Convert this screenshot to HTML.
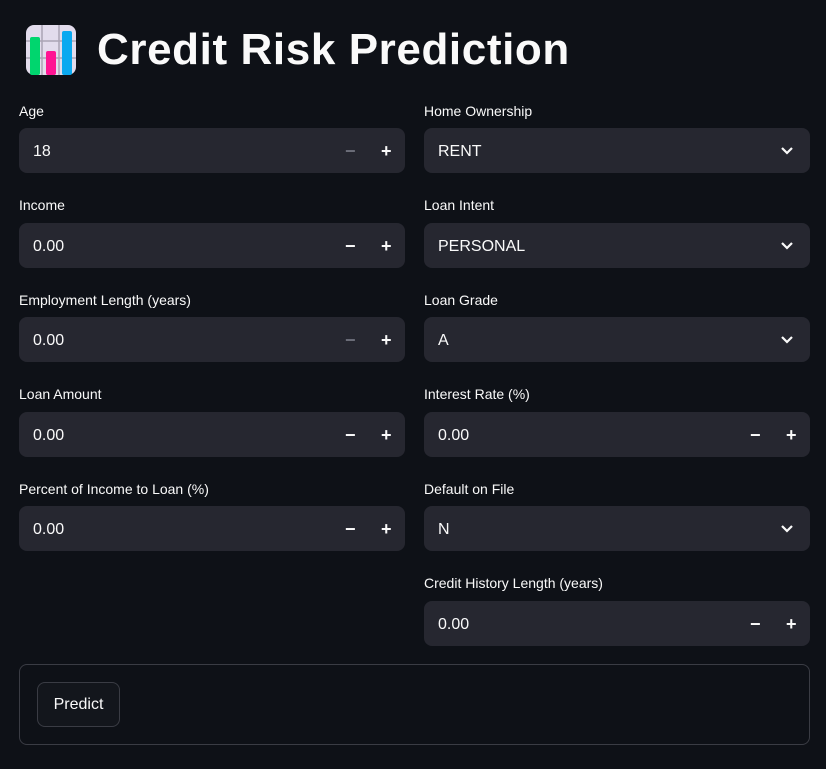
<!DOCTYPE html>
<html><head><meta charset="utf-8"><style>
*{box-sizing:border-box;margin:0;padding:0}
body{width:826px;height:769px;background:#0e1117;color:#fafafa;font-family:"Liberation Sans",sans-serif;position:relative;overflow:hidden}
.title{position:absolute;left:97px;top:24px;font-size:44px;font-weight:bold;letter-spacing:0.6px;line-height:52px}
.lbl{position:absolute;font-size:14px;color:#fafafa;line-height:16px}
.in{position:absolute;width:386px;height:45px;background:#262730;border-radius:8px;font-size:16px;line-height:47px;padding-left:14px}
.pm{position:absolute;top:0;font-size:18px;font-weight:bold}
.chev{position:absolute;right:16px;top:15px}
.form{position:absolute;left:19px;top:664px;width:791px;height:81px;border:1px solid #3a3c44;border-radius:8px}
.btn{position:absolute;left:37px;top:682px;width:83px;height:45px;border:1px solid #3a3c44;border-radius:8px;background:#13161c;font-size:16px;line-height:43px;text-align:center}
</style></head><body>
<svg style="position:absolute;left:26px;top:25px" width="50" height="50" viewBox="0 0 50 50">
<rect x="0" y="0" width="50" height="50" rx="8" fill="#e2dcec"/>
<path d="M16 0V50M33 0V50M0 16H50M0 33H50" stroke="#aaa4b4" stroke-width="1.5"/>
<rect x="4" y="12" width="10" height="38" rx="2" fill="#00d66e"/>
<rect x="20" y="26" width="10" height="24" rx="2" fill="#ff1493"/>
<rect x="36" y="6" width="10" height="44" rx="2" fill="#0aa9f0"/>
</svg>
<div class="title">Credit Risk Prediction</div>

<div class="lbl" style="left:19px;top:103px">Age</div>
<div class="in" style="left:19px;top:128px">18<span class="pm" style="left:326px;color:#6b6d78">−</span><span class="pm" style="left:362px">+</span></div>
<div class="lbl" style="left:19px;top:197px">Income</div>
<div class="in" style="left:19px;top:223px">0.00<span class="pm" style="left:326px">−</span><span class="pm" style="left:362px">+</span></div>
<div class="lbl" style="left:19px;top:292px">Employment Length (years)</div>
<div class="in" style="left:19px;top:317px">0.00<span class="pm" style="left:326px;color:#6b6d78">−</span><span class="pm" style="left:362px">+</span></div>
<div class="lbl" style="left:19px;top:386px">Loan Amount</div>
<div class="in" style="left:19px;top:412px">0.00<span class="pm" style="left:326px">−</span><span class="pm" style="left:362px">+</span></div>
<div class="lbl" style="left:19px;top:481px">Percent of Income to Loan (%)</div>
<div class="in" style="left:19px;top:506px">0.00<span class="pm" style="left:326px">−</span><span class="pm" style="left:362px">+</span></div>

<div class="lbl" style="left:424px;top:103px">Home Ownership</div>
<div class="in" style="left:424px;top:128px">RENT<svg class="chev" width="14" height="14" viewBox="0 0 14 14"><path d="M2 5l5 5 5-5" stroke="#fafafa" stroke-width="2.2" fill="none"/></svg></div>
<div class="lbl" style="left:424px;top:197px">Loan Intent</div>
<div class="in" style="left:424px;top:223px">PERSONAL<svg class="chev" width="14" height="14" viewBox="0 0 14 14"><path d="M2 5l5 5 5-5" stroke="#fafafa" stroke-width="2.2" fill="none"/></svg></div>
<div class="lbl" style="left:424px;top:292px">Loan Grade</div>
<div class="in" style="left:424px;top:317px">A<svg class="chev" width="14" height="14" viewBox="0 0 14 14"><path d="M2 5l5 5 5-5" stroke="#fafafa" stroke-width="2.2" fill="none"/></svg></div>
<div class="lbl" style="left:424px;top:386px">Interest Rate (%)</div>
<div class="in" style="left:424px;top:412px">0.00<span class="pm" style="left:326px">−</span><span class="pm" style="left:362px">+</span></div>
<div class="lbl" style="left:424px;top:481px">Default on File</div>
<div class="in" style="left:424px;top:506px">N<svg class="chev" width="14" height="14" viewBox="0 0 14 14"><path d="M2 5l5 5 5-5" stroke="#fafafa" stroke-width="2.2" fill="none"/></svg></div>
<div class="lbl" style="left:424px;top:575px">Credit History Length (years)</div>
<div class="in" style="left:424px;top:601px">0.00<span class="pm" style="left:326px">−</span><span class="pm" style="left:362px">+</span></div>

<div class="form"></div>
<div class="btn">Predict</div>
</body></html>
